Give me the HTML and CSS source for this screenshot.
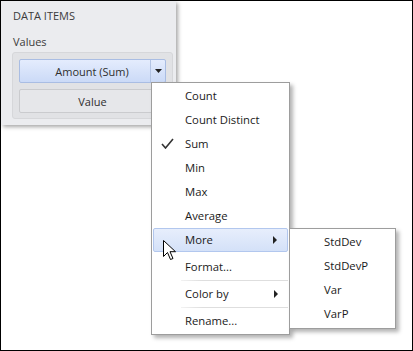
FILE: index.html
```
<!DOCTYPE html>
<html lang="en">
<head>
  <meta charset="UTF-8">
  <title>Data Items - Summary Type</title>
  <link rel="stylesheet" href="styles.css">
</head>
<body>
  <div class="frame">
    <div class="panel">
      <div class="panel-title">DATA ITEMS</div>
      <div class="section-label">Values</div>
      <div class="well">
        <div class="item-btn active">
          <span class="btn-text">Amount (Sum)</span>
          <span class="btn-drop">
            <svg width="7" height="4" viewBox="0 0 7 4"><path d="M0 0h7L3.5 4z" fill="#222"/></svg>
          </span>
        </div>
        <div class="item-btn">Value</div>
      </div>
    </div>

    <ul class="menu main-menu">
      <li class="menu-item">Count</li>
      <li class="menu-item">Count Distinct</li>
      <li class="menu-item checked">
        <svg class="check" width="13" height="11" viewBox="0 0 13 11"><path d="M1 6l3.5 4L12 1" fill="none" stroke="#333" stroke-width="1.6"/></svg>
        Sum
      </li>
      <li class="menu-item">Min</li>
      <li class="menu-item">Max</li>
      <li class="menu-item">Average</li>
      <li class="menu-item hover">More <span class="arrow"></span></li>
      <li class="gap"></li>
      <li class="menu-item">Format...</li>
      <li class="separator"></li>
      <li class="menu-item">Color by <span class="arrow"></span></li>
      <li class="separator"></li>
      <li class="menu-item">Rename...</li>
    </ul>

    <ul class="menu sub-menu">
      <li class="menu-item">StdDev</li>
      <li class="menu-item">StdDevP</li>
      <li class="menu-item">Var</li>
      <li class="menu-item">VarP</li>
    </ul>

    <svg class="cursor" width="13" height="21" viewBox="0 0 13 21">
      <path d="M0.5 0.5v16l4-4 3 7 2.5-1-3-6.8h5.5z" fill="#fff" stroke="#000" stroke-width="1" stroke-linejoin="round"/>
    </svg>
  </div>
</body>
</html>
```
FILE: styles.css
```
body {
  margin: 0;
  font-family: "Segoe UI", "Open Sans", "Noto Sans", sans-serif;
  background: #fff;
}

.frame {
  position: relative;
  width: 413px;
  height: 351px;
  box-sizing: border-box;
  border: 1px solid #000;
  background: #fff;
  overflow: hidden;
}

/* left panel */
.panel {
  width: 175px;
  height: 124px;
  box-sizing: border-box;
  padding: 7px 3px 0 11px;
  background: #ebecef;
  box-shadow: 2px 2px 4px rgba(0, 0, 0, 0.35);
}

.panel-title {
  font-size: 11px;
  line-height: 16px;
  color: #3b3b3b;
  padding-left: 1px;
}

.section-label {
  margin-top: 10px;
  font-size: 11px;
  line-height: 16px;
  color: #3b3b3b;
  padding-left: 1px;
}

.well {
  margin-top: 2px;
  width: 161px;
  box-sizing: border-box;
  padding: 6px 6px 5px;
  background: #e1e2e5;
  border: 1px solid #d6d7da;
  border-radius: 3px;
  display: flex;
  flex-direction: column;
  gap: 6px;
}

.item-btn {
  height: 24px;
  box-sizing: border-box;
  display: flex;
  align-items: center;
  justify-content: center;
  font-size: 11px;
  color: #2e2e2e;
  background: #e6e7ea;
  border: 1px solid #cacbce;
  border-radius: 2px;
}

.item-btn.active {
  justify-content: stretch;
  background: linear-gradient(#e4ecfd, #cbdaf7);
  border-color: #a9bde3;
}

.btn-text {
  flex: 1;
  text-align: center;
  padding-left: 14px;
}

.btn-drop {
  width: 14px;
  height: 100%;
  display: flex;
  align-items: center;
  justify-content: center;
  border-left: 1px solid #b3c4e4;
}

/* context menus */
.menu {
  position: absolute;
  margin: 0;
  padding: 1px 0;
  list-style: none;
  background: #fff;
  border: 1px solid #9d9d9d;
  box-shadow: 3px 3px 4px rgba(0, 0, 0, 0.3);
  font-size: 11.3px;
  color: #1a1a1a;
}

.main-menu {
  left: 150px;
  top: 81px;
  width: 137px;
}

.sub-menu {
  left: 288px;
  top: 227px;
  width: 105px;
  padding: 1px 0 2px;
}

.menu-item {
  position: relative;
  height: 24px;
  line-height: 23px;
  padding-left: 32px;
  margin: 0 1px;
  box-sizing: border-box;
}

.sub-menu .menu-item {
  padding-left: 33px;
}

.menu-item.hover {
  line-height: 21px;
  background: linear-gradient(#e7eefc, #d4e1f8);
  border: 1px solid #b2c7ee;
  border-radius: 2px;
  padding-left: 31px;
}

.check {
  position: absolute;
  left: 8px;
  top: 6px;
}

.arrow {
  position: absolute;
  right: 10px;
  top: 8px;
  width: 0;
  height: 0;
  border-top: 4px solid transparent;
  border-bottom: 4px solid transparent;
  border-left: 4px solid #222;
}

.menu-item.hover .arrow {
  top: 7px;
}

.gap {
  height: 3px;
}

.separator {
  height: 1px;
  margin: 1px 1px 1px 29px;
  background: linear-gradient(to right, #f2f2f2, #dedede 20%);
}

.cursor {
  position: absolute;
  left: 162px;
  top: 239px;
}
```
